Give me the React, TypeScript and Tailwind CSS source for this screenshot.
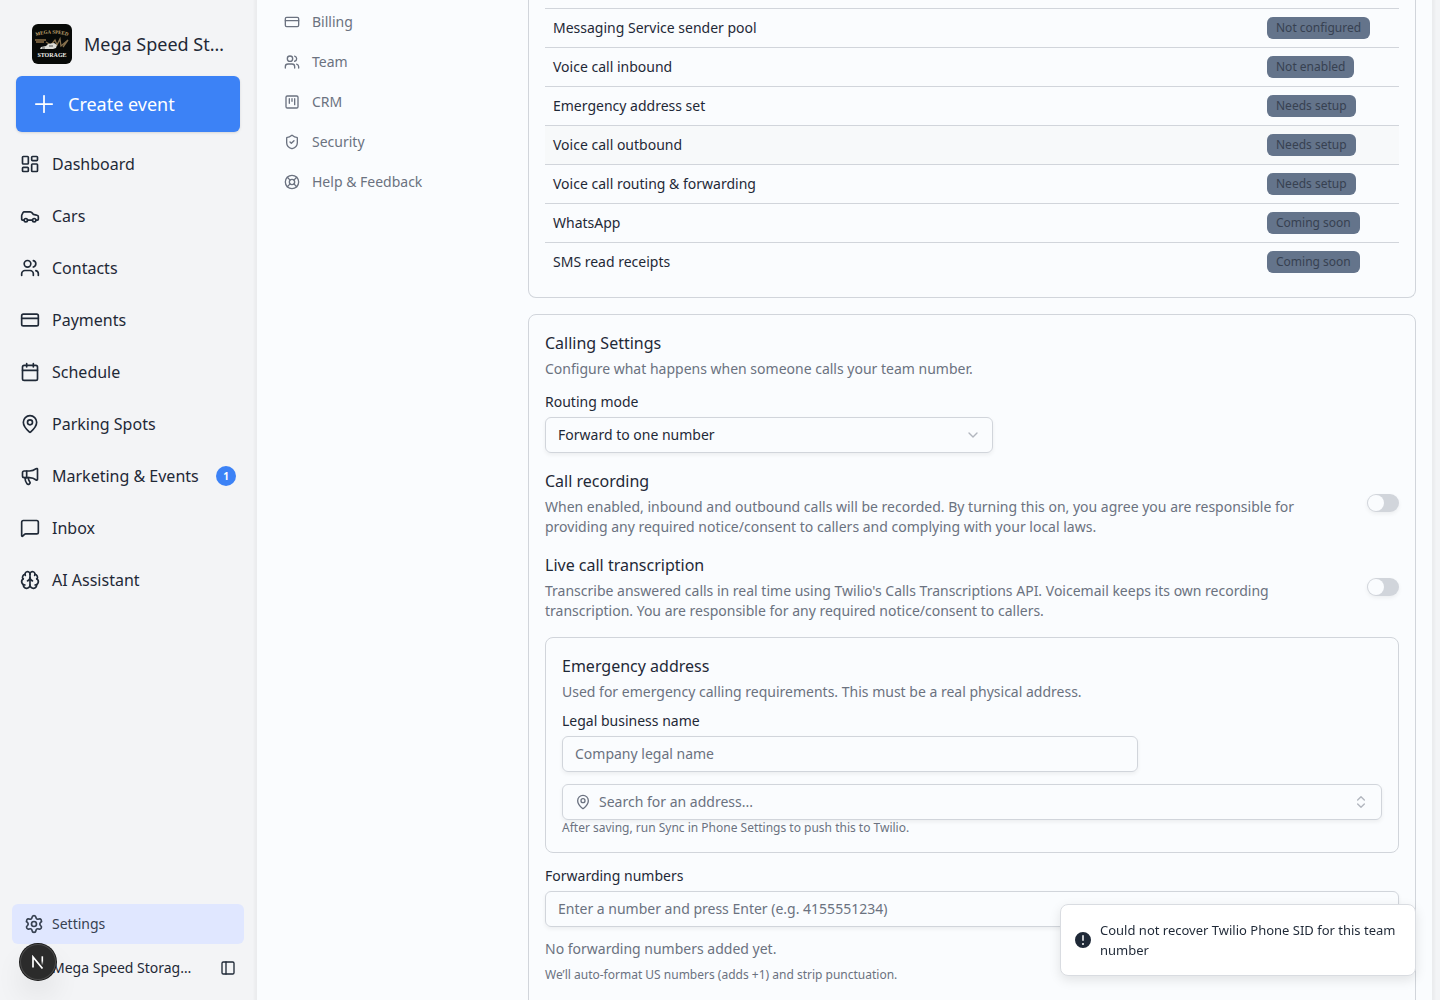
import type { ReactNode } from "react";
import {
  Brain,
  Calendar,
  Car,
  ChevronDown,
  ChevronsUpDown,
  CreditCard,
  LayoutDashboard,
  LifeBuoy,
  MapPin,
  Megaphone,
  MessageSquare,
  PanelLeft,
  Plus,
  Settings,
  ShieldCheck,
  SquareKanban,
  Users,
  type LucideIcon,
} from "lucide-react";

type NavItem = { label: string; icon: LucideIcon; badge?: number };

const mainNav: NavItem[] = [
  { label: "Dashboard", icon: LayoutDashboard },
  { label: "Cars", icon: Car },
  { label: "Contacts", icon: Users },
  { label: "Payments", icon: CreditCard },
  { label: "Schedule", icon: Calendar },
  { label: "Parking Spots", icon: MapPin },
  { label: "Marketing & Events", icon: Megaphone, badge: 1 },
  { label: "Inbox", icon: MessageSquare },
  { label: "AI Assistant", icon: Brain },
];

const settingsNav: NavItem[] = [
  { label: "Billing", icon: CreditCard },
  { label: "Team", icon: Users },
  { label: "CRM", icon: SquareKanban },
  { label: "Security", icon: ShieldCheck },
  { label: "Help & Feedback", icon: LifeBuoy },
];

const capabilities = [
  { name: "Messaging Service sender pool", status: "Not configured" },
  { name: "Voice call inbound", status: "Not enabled" },
  { name: "Emergency address set", status: "Needs setup" },
  { name: "Voice call outbound", status: "Needs setup", active: true },
  { name: "Voice call routing & forwarding", status: "Needs setup" },
  { name: "WhatsApp", status: "Coming soon" },
  { name: "SMS read receipts", status: "Coming soon" },
];

function TeamLogo() {
  return (
    <svg viewBox="0 0 40 40" className="size-10 shrink-0 rounded-md" role="img" aria-label="Mega Speed Storage">
      <defs>
        <path id="arc" d="M1 13 Q20 6 39 13" />
      </defs>
      <rect width="40" height="40" fill="#080a08" />
      <text fontFamily="Liberation Serif, serif" fontSize="5" fontWeight="700" fill="#c4a873" textAnchor="middle">
        <textPath href="#arc" startOffset="50%">
          MEGA SPEED
        </textPath>
      </text>
      <path d="M3 16h11M4 18h8" stroke="#8d7148" strokeWidth="1.4" />
      <path d="M14 18l5 3 4-5 2 5 3-6 1 7 7-6-5 7" stroke="#86704c" strokeWidth="1.3" fill="none" />
      <path d="M8 25l1-2 5-1 2-2 6-1 3 2-1 3-3 1z" fill="#dcdcd6" />
      <path d="M10 24h3M17 22h4" stroke="#333" strokeWidth="0.8" />
      <text x="20" y="33" fontFamily="Liberation Serif, serif" fontSize="6" fontWeight="700" fill="#f0f0ec" textAnchor="middle">
        STORAGE
      </text>
    </svg>
  );
}

function Sidebar() {
  return (
    <aside className="flex w-64 shrink-0 flex-col pt-6 pb-2">
      <div className="flex items-center gap-3 pr-7 pl-8">
        <TeamLogo />
        <span className="truncate text-lg">Mega Speed Storage</span>
      </div>
      <button className="mx-4 mt-3 flex h-14 items-center gap-2.5 rounded-md bg-[#3c82f6] px-3.5 text-lg text-white shadow-sm">
        <Plus className="size-7" strokeWidth={1.5} />
        Create event
      </button>
      <nav className="mt-2 flex flex-col gap-1 px-3">
        {mainNav.map(({ label, icon: Icon, badge }) => (
          <a key={label} href="#" className="flex h-12 items-center gap-3 rounded-md px-2">
            <Icon className="size-5 shrink-0" />
            <span className="whitespace-nowrap">{label}</span>
            {badge && (
              <span className="ml-auto grid size-5 place-items-center rounded-full bg-[#3c82f6] text-[10px] font-bold text-white">
                {badge}
              </span>
            )}
          </a>
        ))}
      </nav>
      <div className="mt-auto px-3">
        <a href="#" className="flex h-10 items-center gap-2 rounded-md bg-[#e0e7ff] px-3 text-sm text-[#374151]">
          <Settings className="size-5" />
          Settings
        </a>
        <div className="flex h-12 items-center pr-2 pl-10 text-sm">
          <span className="w-35 truncate">Mega Speed Storage Team</span>
          <button className="ml-auto" aria-label="Toggle sidebar">
            <PanelLeft className="size-4" />
          </button>
        </div>
      </div>
    </aside>
  );
}

function SettingsNav() {
  return (
    <nav className="flex w-60 shrink-0 flex-col gap-1 pt-1">
      {settingsNav.map(({ label, icon: Icon }) => (
        <a key={label} href="#" className="flex h-9 items-center gap-3 px-3 text-sm text-[#6b7280]">
          <Icon className="size-4" />
          {label}
        </a>
      ))}
    </nav>
  );
}

function CapabilitiesCard() {
  return (
    <section className="rounded-b-lg border border-t-0 border-[#d1d5db] px-4 pt-2 pb-[15px]">
      <table className="w-full text-sm">
        <tbody>
          {capabilities.map(({ name, status, active }) => (
            <tr key={name} className={active ? "border-t border-[#d1d5db] bg-[#f7f9fa]" : "border-t border-[#d1d5db]"}>
              <td className="h-[39px] px-2">{name}</td>
              <td className="w-[140px] px-2">
                <span className="inline-flex h-[22px] items-center rounded-md bg-[#64748b] px-[9px] align-middle text-xs text-[#374151]">
                  {status}
                </span>
              </td>
            </tr>
          ))}
        </tbody>
      </table>
    </section>
  );
}

function SectionText({ title, children }: { title: string; children: ReactNode }) {
  return (
    <div>
      <h3 className="text-base">{title}</h3>
      <p className="mt-1 text-sm text-[#6b7280]">{children}</p>
    </div>
  );
}

function ToggleRow({ id, title, children }: { id: string; title: string; children: ReactNode }) {
  return (
    <div className="flex items-center justify-between gap-4">
      <label htmlFor={id} className="max-w-[768px]">
        <span className="block text-base">{title}</span>
        <span className="mt-1 block text-sm text-[#6b7280]">{children}</span>
      </label>
      <input
        id={id}
        type="checkbox"
        role="switch"
        className="relative h-[18px] w-8 shrink-0 appearance-none rounded-full bg-[#d1d5db] shadow-[0_2px_4px_rgba(0,0,0,0.06)] before:absolute before:top-px before:left-px before:size-4 before:rounded-full before:bg-[#fafcfe] checked:bg-[#3c82f6] checked:before:left-[15px]"
      />
    </div>
  );
}

const labelClass = "block text-sm leading-[22px]";
const fieldClass =
  "h-9 w-full rounded-md border border-[#d1d5db] bg-transparent px-3 text-sm shadow-[0_2px_4px_rgba(0,0,0,0.06)] placeholder:text-[#6b7280]";

function EmergencyAddress() {
  return (
    <div className="rounded-lg border border-[#d1d5db] p-4">
      <SectionText title="Emergency address">
        Used for emergency calling requirements. This must be a real physical address.
      </SectionText>
      <label htmlFor="legal-name" className={`${labelClass} mt-2`}>
        Legal business name
      </label>
      <input id="legal-name" className={`${fieldClass} mt-1 block max-w-xl`} placeholder="Company legal name" />
      <button className={`${fieldClass} mt-3 flex items-center gap-2 text-[#6b7280]`}>
        <MapPin className="size-4" />
        Search for an address...
        <ChevronsUpDown className="ml-auto size-4 opacity-50" />
      </button>
      <p className="text-xs text-[#6b7280]">After saving, run Sync in Phone Settings to push this to Twilio.</p>
    </div>
  );
}

function CallingSettings() {
  return (
    <section className="rounded-lg border border-[#d1d5db] p-4 pb-12">
      <SectionText title="Calling Settings">Configure what happens when someone calls your team number.</SectionText>
      <label htmlFor="routing" className={`${labelClass} mt-3`}>
        Routing mode
      </label>
      <div className="relative mt-1 max-w-md">
        <select id="routing" className={`${fieldClass} appearance-none`}>
          <option>Forward to one number</option>
        </select>
        <ChevronDown className="pointer-events-none absolute top-2.5 right-3 size-4 text-[#6b7280] opacity-50" />
      </div>
      <div className="mt-4 flex flex-col gap-4">
        <ToggleRow id="recording" title="Call recording">
          When enabled, inbound and outbound calls will be recorded. By turning this on, you agree you are responsible
          for providing any required notice/consent to callers and complying with your local laws.
        </ToggleRow>
        <ToggleRow id="transcription" title="Live call transcription">
          Transcribe answered calls in real time using Twilio's Calls Transcriptions API. Voicemail keeps its own
          recording transcription. You are responsible for any required notice/consent to callers.
        </ToggleRow>
        <EmergencyAddress />
      </div>
      <label htmlFor="forwarding" className={`${labelClass} mt-3`}>
        Forwarding numbers
      </label>
      <input
        id="forwarding"
        className={`${fieldClass} mt-1 block`}
        placeholder="Enter a number and press Enter (e.g. 4155551234)"
      />
      <p className="mt-3 text-sm text-[#6b7280]">No forwarding numbers added yet.</p>
      <p className="mt-2 text-xs text-[#6b7280]">We’ll auto-format US numbers (adds +1) and strip punctuation.</p>
    </section>
  );
}

function Toast() {
  return (
    <div
      role="status"
      className="fixed right-6 bottom-6 flex w-[356px] items-center gap-[7px] rounded-lg border border-[#d9dce1] bg-white px-3 py-[15px] text-[13px] leading-5 shadow-[0_4px_12px_rgba(0,0,0,0.1)]"
    >
      <svg viewBox="0 0 20 20" className="size-5 shrink-0" fill="currentColor">
        <path
          fillRule="evenodd"
          clipRule="evenodd"
          d="M18 10a8 8 0 1 1-16 0 8 8 0 0 1 16 0Zm-8-5a.75.75 0 0 1 .75.75v4.5a.75.75 0 0 1-1.5 0v-4.5A.75.75 0 0 1 10 5Zm0 10a1 1 0 1 0 0-2 1 1 0 0 0 0 2Z"
        />
      </svg>
      <span>Could not recover Twilio Phone SID for this team number</span>
    </div>
  );
}

function DevBadge() {
  return (
    <button
      aria-label="Open dev tools"
      className="fixed bottom-5 left-5 grid size-9 place-items-center rounded-full bg-[#2b2b2b] shadow-[0_0_0_1px_#171717,inset_0_0_0_1px_#4a4a4a,0_16px_32px_-8px_rgba(0,0,0,0.24)]"
    >
      <svg viewBox="0 0 14 14" className="size-3.5" fill="none" strokeWidth="1.7">
        <defs>
          <linearGradient id="fade" x1="0" y1="0" x2="0" y2="1">
            <stop offset="0.5" stopColor="#fff" />
            <stop offset="1" stopColor="#fff" stopOpacity="0" />
          </linearGradient>
        </defs>
        <path d="M2 12.5V2l9.5 11.5" stroke="#fff" />
        <rect x="10.5" y="1.3" width="1.6" height="9" fill="url(#fade)" />
      </svg>
    </button>
  );
}

export default function App() {
  return (
    <div className="flex h-screen overflow-hidden bg-[#f3f4f6] font-['Noto_Sans',sans-serif] text-[#1f2937]">
      <Sidebar />
      <main className="mr-2 ml-px flex min-w-0 flex-1 gap-4 overflow-hidden bg-[#fafcfe] pr-4 pl-[15px] shadow-[0_0_2px_3px_rgba(0,0,0,0.03)]">
        <SettingsNav />
        <div className="flex min-w-0 flex-1 flex-col gap-4">
          <CapabilitiesCard />
          <CallingSettings />
        </div>
      </main>
      <Toast />
      <DevBadge />
    </div>
  );
}
